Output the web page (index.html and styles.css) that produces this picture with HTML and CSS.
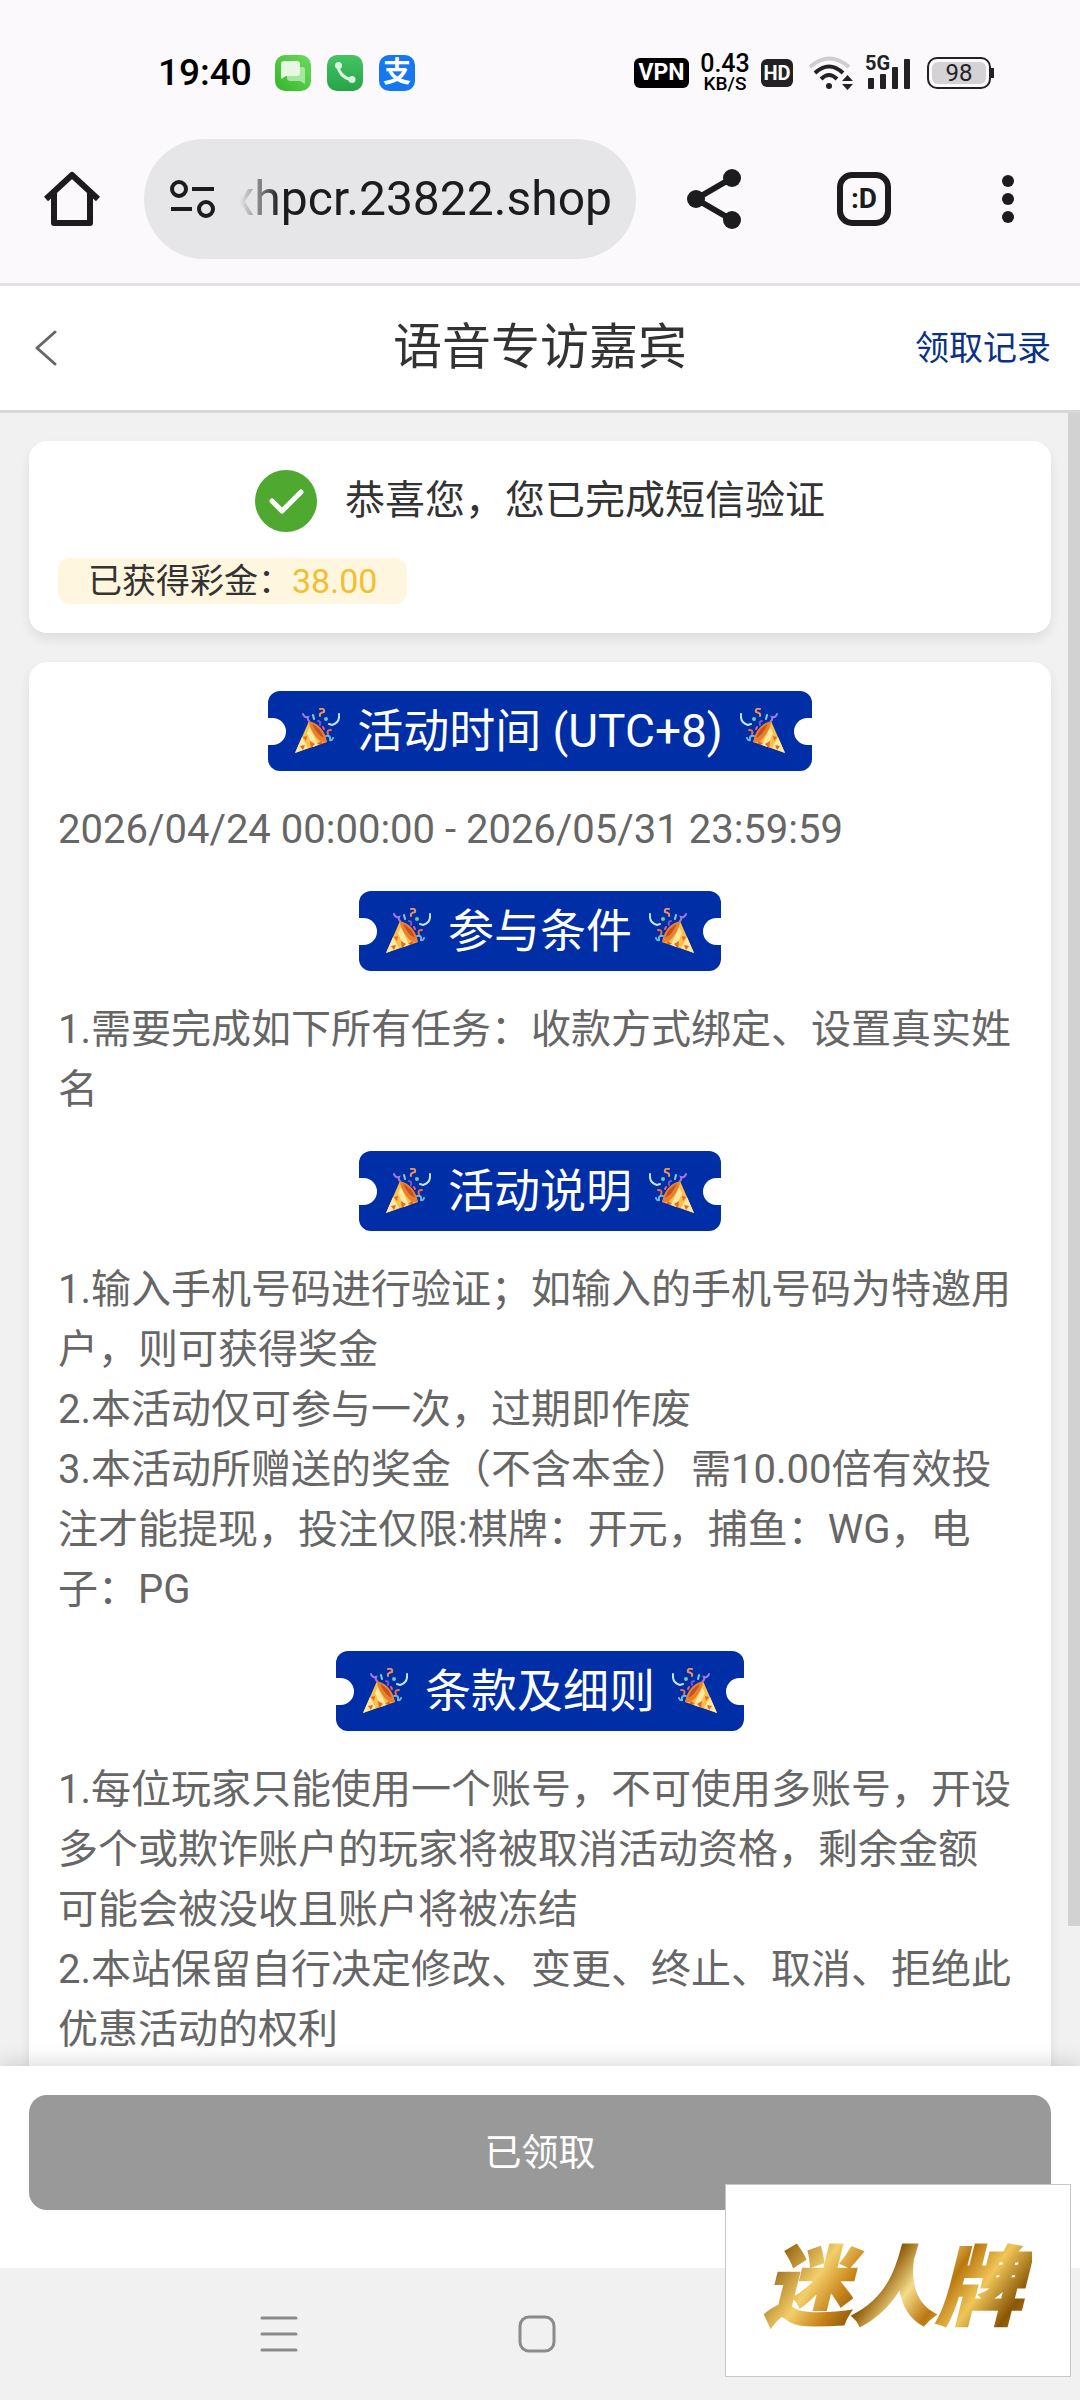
FILE: index.html
```html
<!DOCTYPE html>
<html lang="zh-CN">
<head>
<meta charset="utf-8">
<meta name="viewport" content="width=device-width, initial-scale=1">
<title>语音专访嘉宾</title>
<link rel="stylesheet" href="styles.css">
</head>
<body>
<svg class="sprite" aria-hidden="true">
  <symbol id="popper" viewBox="0 0 46 46">
    <path d="M1 45 15 13Q28 20 33 34Z" fill="#f9c04a"/>
    <path d="M1 45 8 29 14 40ZM16 19 24 37 19 39 13 25Z" fill="#fde9a0"/>
    <path d="M9 29 13 28 12 33ZM6 38 11 37 9 42ZM16 33 21 36 17 40ZM23 36 27 33 29 36Z" fill="#e8622c"/>
    <path d="M15 13Q30 17 33 34 27 36 22 29 15 20 15 13Z" fill="#e9802f"/>
    <path d="M18 16Q27 20 30 30 24 28 18 16Z" fill="#c94f1d"/>
    <g fill="none" stroke-width="2" stroke-linecap="round">
      <path d="M15 13Q13 11 14 9 10 10 9 6" stroke="#a878e0"/>
      <path d="M26 1Q31 0 30 4 25 5 26 8" stroke="#f0905c"/>
      <path d="M45 6Q46 15 38 17L35 16" stroke="#c3e4f2"/>
      <path d="M19 7 20 11" stroke="#7ed0c4"/>
      <path d="M24 13Q27 13 26 17" stroke="#7458d8"/>
      <circle cx="32" cy="11" r="1" stroke="#6cc9a0"/>
      <path d="M37 22Q32 22 34 26" stroke="#ef6a48"/>
      <path d="M32 28Q37 27 36 32 38 33 39 30" stroke="#6cb9d8"/>
      <path d="M29 19 30 21" stroke="#e75a7c"/>
    </g>
  </symbol>
</svg>

<div class="app">
  <header class="browser">
    <div class="status">
      <div class="status-left">
        <time class="clock">19:40</time>
        <svg class="app-icon" viewBox="0 0 36 36"><defs><linearGradient id="g1" x1="0" y1="1" x2="1" y2="0"><stop offset="0" stop-color="#35b52b"/><stop offset="1" stop-color="#6bdc5c"/></linearGradient></defs><rect width="36" height="36" rx="10" fill="url(#g1)"/><path d="M15 12H28Q30 12 30 15V29L25 26H15Q12 26 12 23V15Q12 12 15 12Z" fill="#a8e6a0"/><path d="M9 6H22Q25 6 25 9V18Q25 21 22 21H11L6 24V9Q6 6 9 6Z" fill="#e6f8e3"/></svg>
        <svg class="app-icon" viewBox="0 0 36 36"><defs><linearGradient id="g2" x1="0" y1="0" x2="0" y2="1"><stop offset="0" stop-color="#44c563"/><stop offset="1" stop-color="#27a348"/></linearGradient></defs><rect width="36" height="36" rx="10" fill="url(#g2)"/><path d="M11 11Q12 21 24 25" fill="none" stroke="#d9f5df" stroke-width="3"/><circle cx="11.500" cy="10.500" r="3.500" fill="#d9f5df"/><circle cx="25" cy="24.500" r="3.500" fill="#d9f5df"/></svg>
        <span class="app-icon alipay">支</span>
      </div>
      <div class="status-right">
        <span class="vpn">VPN</span>
        <span class="speed"><span>0.43</span><small>KB/S</small></span>
        <span class="hd">HD</span>
        <svg width="44" height="34" viewBox="0 0 44 34" fill="none"><path d="M1 11Q20 -6 40 11" stroke="#cfcdcf" stroke-width="4"/><path d="M6 17Q20 4 34 17" stroke="#222" stroke-width="4"/><path d="M12 23Q20 15 28 23" stroke="#222" stroke-width="4"/><circle cx="20" cy="30" r="3" fill="#222"/><path d="M33 25 38.500 19 44 25ZM33 28H44L38.500 34Z" fill="#222"/></svg>
        <span class="signal"><svg width="46" height="33" viewBox="0 0 46 33" fill="#222"><rect x="3" y="21" width="6" height="11" rx="1"/><rect x="15" y="17" width="6" height="15" rx="1"/><rect x="27" y="10" width="6" height="22" rx="1"/><rect x="39" y="2" width="6" height="30" rx="1"/></svg><b>5G</b></span>
        <span class="battery"><span>98</span></span>
      </div>
    </div>
    <div class="toolbar">
      <button class="tool home" aria-label="主页"><svg width="72" height="72" viewBox="0 0 72 72" fill="none" stroke="#1c1b1d" stroke-width="6" stroke-linejoin="round"><path d="M18 27V60H54V27" /><path d="M10 36 36 12 62 36"/></svg></button>
      <button class="address"><svg width="46" height="40" viewBox="0 0 46 40" fill="none" stroke="#1c1b1d"><circle cx="9" cy="10" r="7" stroke-width="4"/><circle cx="36" cy="30" r="7" stroke-width="4"/><path d="M22 10H44M1 30H22" stroke-width="4"/></svg><span class="url">xhpcr.23822.shop</span></button>
      <button class="tool share" aria-label="分享"><svg width="72" height="72" viewBox="0 0 72 72" fill="#1c1b1d"><path d="M54 15 18 36 54 57" fill="none" stroke="#1c1b1d" stroke-width="6"/><circle cx="54" cy="15" r="9"/><circle cx="18" cy="36" r="9"/><circle cx="54" cy="57" r="9"/></svg></button>
      <button class="tool"><span class="tabs">:D</span></button>
      <button class="tool" aria-label="更多"><svg width="72" height="72" viewBox="0 0 72 72" fill="#1c1b1d"><circle cx="36" cy="18" r="6"/><circle cx="36" cy="36" r="6"/><circle cx="36" cy="54" r="6"/></svg></button>
    </div>
  </header>

  <nav class="titlebar">
    <button class="back" aria-label="返回"><svg width="24" height="36" viewBox="0 0 24 36" fill="none" stroke="#666" stroke-width="3" stroke-linecap="round" stroke-linejoin="round"><path d="M21 2 3 18 21 34"/></svg></button>
    <h1>语音专访嘉宾</h1>
    <a href="#records">领取记录</a>
  </nav>

  <div class="viewport">
    <main class="content">
      <section class="card result">
        <div class="success">
          <svg width="62" height="62" viewBox="0 0 62 62"><circle cx="31" cy="31" r="31" fill="#4fa830"/><path d="M17 31 27 41 46 22" fill="none" stroke="#fff" stroke-width="5" stroke-linecap="round" stroke-linejoin="round"/></svg>
          <span>恭喜您，您已完成短信验证</span>
        </div>
        <p class="bonus">已获得彩金：<em>38.00</em></p>
      </section>
      <article class="card rules">
        <h2><svg class="pop"><use href="#popper"/></svg>活动时间 (UTC+8)<svg class="pop flip"><use href="#popper"/></svg></h2>
        <p>2026/04/24 00:00:00 - 2026/05/31 23:59:59</p>
        <h2><svg class="pop"><use href="#popper"/></svg>参与条件<svg class="pop flip"><use href="#popper"/></svg></h2>
        <p>1.需要完成如下所有任务：收款方式绑定、设置真实姓名</p>
        <h2><svg class="pop"><use href="#popper"/></svg>活动说明<svg class="pop flip"><use href="#popper"/></svg></h2>
        <p>1.输入手机号码进行验证；如输入的手机号码为特邀用户，则可获得奖金<br>2.本活动仅可参与一次，过期即作废<br>3.本活动所赠送的奖金（不含本金）需10.00倍有效投注才能提现，投注仅限:棋牌：开元，捕鱼：WG，电子：PG</p>
        <h2><svg class="pop"><use href="#popper"/></svg>条款及细则<svg class="pop flip"><use href="#popper"/></svg></h2>
        <p>1.每位玩家只能使用一个账号，不可使用多账号，开设多个或欺诈账户的玩家将被取消活动资格，剩余金额可能会被没收且账户将被冻结<br>2.本站保留自行决定修改、变更、终止、取消、拒绝此优惠活动的权利</p>
      </article>
    </main>
    <div class="scroll-thumb"></div>
  </div>

  <footer class="action"><button class="claim">已领取</button></footer>

  <div class="system-nav">
    <button aria-label="最近任务"><svg width="38" height="38" viewBox="0 0 38 38" stroke="#8b8b8b" stroke-width="3" stroke-linecap="round"><path d="M2 3H36M2 19H36M2 35H36"/></svg></button>
    <button aria-label="主屏幕"><svg width="38" height="38" viewBox="0 0 38 38" fill="none" stroke="#8b8b8b" stroke-width="3"><rect x="2" y="2" width="34" height="34" rx="9"/></svg></button>
  </div>
  <div class="watermark"><span>迷人牌</span></div>
</div>
</body>
</html>
```
FILE: styles.css
```css
* { box-sizing: border-box; margin: 0; padding: 0; }
body { font-family: Roboto, "Noto Sans CJK SC", sans-serif; color: #333; background: #f1f1f1; }
button { font: inherit; color: inherit; background: none; border: 0; }
svg { display: block; flex: none; }
.sprite { position: absolute; width: 0; height: 0; }
.app { position: relative; display: flex; flex-direction: column; height: 100vh; overflow: hidden; }

.browser { flex: none; background: #fbf9fb; border-bottom: 3px solid #e3e1e3; }
.status { display: flex; justify-content: space-between; padding: 50px 86px 0 158px; color: #000; }
.status-left, .status-right { display: flex; align-items: center; height: 46px; }
.status-left { gap: 16px; }
.clock { width: 101px; font-size: 37px; font-weight: 500; line-height: 46px; }
.app-icon { width: 36px; height: 36px; }
.alipay { border-radius: 10px; background: #1677f2; color: #fff; font-size: 28px; font-weight: 700; line-height: 36px; text-align: center; }
.status-right { gap: 12px; font-weight: 500; }
.vpn, .hd { border-radius: 6px; color: #fff; font-weight: 700; text-align: center; }
.vpn { width: 55px; background: #000; font-size: 23px; line-height: 30px; }
.hd { width: 32px; margin-right: 4px; background: #222; font-size: 20px; line-height: 28px; }
.speed { display: flex; flex-direction: column; align-items: center; width: 48px; font-size: 25px; line-height: 21px; }
.speed small { font-size: 19px; line-height: 19px; }
.signal { position: relative; margin-right: 4px; }
.signal b { position: absolute; left: 0; top: -4px; font-size: 20px; line-height: 20px; font-weight: 700; color: #222; background: #fbf9fb; }
.battery { position: relative; width: 64px; height: 32px; margin-right: 3px; padding: 3px; border: 2px solid #222; border-radius: 10px; }
.battery span { display: block; border-radius: 6px; background: #d4d2d4; color: #222; font-size: 24px; font-weight: 400; line-height: 22px; text-align: center; }
.battery::after { content: ""; position: absolute; right: -5px; top: 9px; width: 3px; height: 10px; background: #222; }

.toolbar { display: flex; align-items: center; padding: 43px 0 24px; color: #1c1b1d; }
.tool { display: flex; align-items: center; justify-content: center; width: 144px; height: 72px; }
.share { margin: 0 6px; }
.tabs { width: 54px; height: 54px; border: 6px solid #1c1b1d; border-radius: 15px; font-size: 28px; font-weight: 700; line-height: 42px; text-align: center; }
.address { display: flex; flex: 1; align-items: center; gap: 24px; min-width: 0; height: 120px; padding: 0 24px 0 26px; border-radius: 60px; background: #e6e6e8; }
.url { flex: 1; display: flex; justify-content: flex-end; min-width: 0; overflow: hidden; font-size: 48px; line-height: 60px; white-space: nowrap; -webkit-mask-image: linear-gradient(90deg, transparent, #000 40px); mask-image: linear-gradient(90deg, transparent, #000 40px); }

.titlebar { display: grid; grid-template-columns: 1fr auto 1fr; align-items: center; flex: none; height: 127px; padding: 0 29px; border-bottom: 3px solid #d8d8d8; background: #fff; }
.titlebar h1 { font-size: 49px; font-weight: 400; line-height: 60px; }
.titlebar a { justify-self: end; color: #0a3187; font-size: 34px; line-height: 60px; text-decoration: none; }
.back { justify-self: start; padding: 0 5px; }

.viewport { position: relative; flex: 1; min-height: 0; }
.content { display: flex; flex-direction: column; gap: 29px; height: 100%; padding: 28px 29px; overflow-y: auto; scrollbar-width: none; }
.scroll-thumb { position: absolute; top: 0; right: 0; width: 12px; height: calc(100% - 140px); background: #d2d2d2; }
.card { flex: none; padding: 29px; border-radius: 18px; background: #fff; box-shadow: 0 6px 12px rgba(0, 0, 0, .08); }
.success { display: flex; align-items: center; justify-content: center; gap: 28px; font-size: 40px; line-height: 62px; }
.bonus { width: fit-content; margin-top: 26px; padding: 0 30px; border-radius: 12px; background: #fff6df; font-size: 34px; line-height: 46px; }
.bonus em { color: #f0c030; font-style: normal; }

.rules { display: flex; flex-direction: column; align-items: center; }
.rules h2 { position: relative; display: flex; align-items: center; gap: 17px; height: 80px; padding: 0 26px; border-radius: 12px; background: #002ea6; color: #fff; font-size: 46px; font-weight: 400; line-height: 80px; white-space: nowrap; }
.rules h2::before, .rules h2::after { content: ""; position: absolute; top: 27px; width: 18px; height: 27px; background: #fff; }
.rules h2::before { left: 0; border-radius: 0 14px 14px 0; }
.rules h2::after { right: 0; border-radius: 14px 0 0 14px; }
.pop { width: 46px; height: 46px; }
.flip { transform: scaleX(-1); }
.rules p { align-self: stretch; margin: 29px 8px 31px 0; color: #666; font-size: 40px; line-height: 60px; }

.action { position: relative; flex: none; padding: 29px 29px 58px; background: #fff; box-shadow: 0 -4px 20px rgba(0, 0, 0, .14); }
.claim { display: block; width: 100%; height: 115px; padding-bottom: 5px; border-radius: 18px; background: #999; color: #fff; font-size: 37px; }
.system-nav { position: relative; display: flex; flex: none; align-items: center; gap: 220px; height: 132px; padding: 0 260px; background: #f1f1f1; }
.watermark { position: absolute; right: 9px; bottom: 23px; display: flex; align-items: center; justify-content: center; width: 346px; height: 193px; padding-right: 10px; border: 1px solid #c8c8c8; background: #fff; }
.watermark span { padding: 0 10px; background: linear-gradient(125deg, #b07812, #8a5708 12%, #f3cf6a 28%, #c8841a 38%, #8f5a08 46%, #f6dc8a 56%, #b9770f 66%, #f0c658 76%, #8a5606 88%, #c98d20); -webkit-background-clip: text; background-clip: text; color: transparent; -webkit-text-stroke: 2px transparent; font-family: "Noto Sans CJK SC", sans-serif; font-size: 86px; font-style: italic; font-weight: 900; line-height: 120px; }
```
